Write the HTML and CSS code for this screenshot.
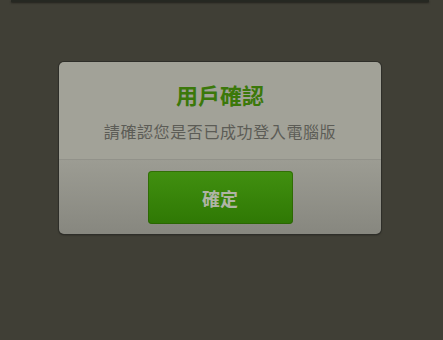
FILE: index.html
```html
<!DOCTYPE html>
<html>
<head>
<meta charset="utf-8">
<link rel="stylesheet" href="styles.css">
</head>
<body>
<div class="topbar"></div>
<div class="dialog">
  <div class="dialog-body">
    <div class="title">用戶確認</div>
    <div class="message">請確認您是否已成功登入電腦版</div>
  </div>
  <div class="dialog-foot">
    <div class="btn">確定</div>
  </div>
</div>
</body>
</html>
```
FILE: styles.css
```css
html, body {
  margin: 0;
  padding: 0;
}
body {
  width: 443px;
  height: 340px;
  background: #403f36;
  font-family: "Noto Sans CJK TC", "Noto Sans CJK SC", sans-serif;
  overflow: hidden;
}
.topbar {
  height: 2px;
  margin: 0 14px 0 11px;
  background: #262822;
  box-shadow: 0 1px 2px rgba(0,0,0,0.5);
}
.dialog {
  margin: 60px 0 0 59px;
  width: 322px;
  border-radius: 5px;
  overflow: hidden;
  box-shadow: 0 0 0 1px #2e2e29, 0 1px 2px rgba(0,0,0,0.5);
}
.dialog-body {
  height: 97px;
  background: #a2a298;
  border-bottom: 1px solid #92928a;
  display: flex;
  flex-direction: column;
  align-items: center;
}
.title {
  margin-top: 17px;
  font-size: 22px;
  line-height: 30px;
  font-weight: 700;
  color: #3b780a;
}
.message {
  margin-top: 11px;
  font-size: 16px;
  line-height: 22px;
  color: #5c5c56;
  letter-spacing: 0.6px;
}
.dialog-foot {
  height: 74px;
  background: linear-gradient(#9c9c93, #87877f);
  display: flex;
  justify-content: center;
  padding-top: 11px;
  box-sizing: border-box;
}
.btn {
  width: 145px;
  height: 53px;
  border-radius: 4px;
  background: linear-gradient(#419010, #2f7804);
  box-shadow: inset 0 0 0 1px rgba(40,90,0,0.6);
  display: flex;
  align-items: center;
  justify-content: center;
  font-size: 18px;
  font-weight: 700;
  color: #afb4a6;
}
```
